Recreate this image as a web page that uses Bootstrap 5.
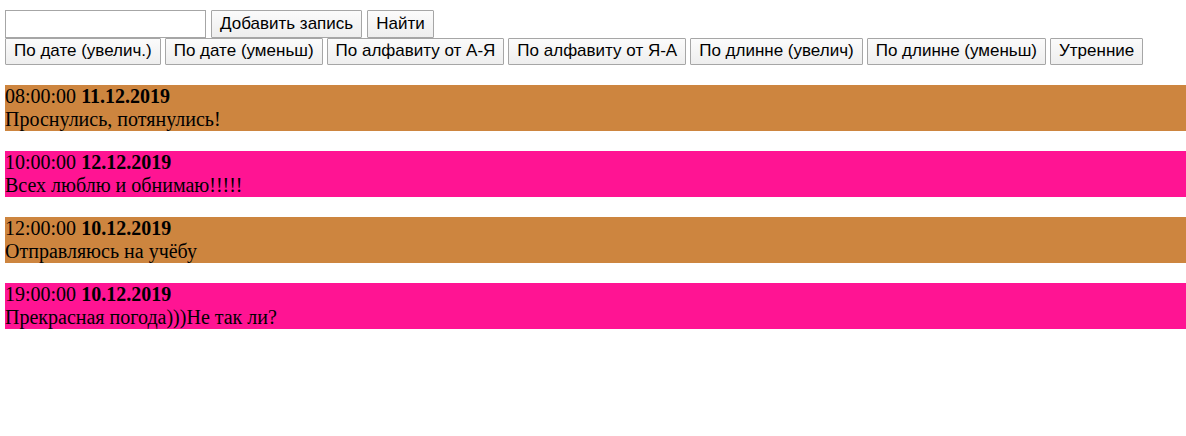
<!DOCTYPE html>
<html lang="ru">
<head>
<meta charset="utf-8">
<meta name="viewport" content="width=device-width, initial-scale=1">
<title>Записи</title>
<link rel="stylesheet" href="https://cdn.jsdelivr.net/npm/bootstrap@5.3.0/dist/css/bootstrap.min.css">
<style>
body { font-family: "Liberation Serif", serif; font-size: 20px; line-height: 23px; color: #000; background: #fff; padding: 10px 0 0 5px; }
.toolbar .btn, .toolbar .form-control { font-family: "Liberation Sans", sans-serif; font-size: 17px; line-height: 20px; color: #000; border: 1px solid #a6a6a6; border-radius: 1px; }
.toolbar .btn { padding: 3px 8px; background: linear-gradient(#fbfbfb, #eee); }
.toolbar .form-control { width: 201px; padding: 3px; border-radius: 0; }
.toolbar-search { gap: 5px; }
.toolbar-sort { gap: 4px; }
.toolbar-sort .btn { padding-top: 2px; }
.entries { margin-top: 20px; gap: 20px; }
.entry-morning { background: #cd853f; }
.entry-pink { background: #ff1493; }
</style>
</head>
<body>
<header>
<form class="toolbar toolbar-search d-flex flex-wrap">
<input type="text" class="form-control" aria-label="Текст записи">
<button type="button" class="btn">Добавить запись</button>
<button type="button" class="btn">Найти</button>
</form>
<div class="toolbar toolbar-sort d-flex flex-wrap">
<button type="button" class="btn">По дате (увелич.)</button>
<button type="button" class="btn">По дате (уменьш)</button>
<button type="button" class="btn">По алфавиту от А-Я</button>
<button type="button" class="btn">По алфавиту от Я-А</button>
<button type="button" class="btn">По длинне (увелич)</button>
<button type="button" class="btn">По длинне (уменьш)</button>
<button type="button" class="btn">Утренние</button>
</div>
</header>
<main class="entries d-flex flex-column">
<article class="entry-morning"><div>08:00:00 <b>11.12.2019</b></div><div>Проснулись, потянулись!</div></article>
<article class="entry-pink"><div>10:00:00 <b>12.12.2019</b></div><div>Всех люблю и обнимаю!!!!!</div></article>
<article class="entry-morning"><div>12:00:00 <b>10.12.2019</b></div><div>Отправляюсь на учёбу</div></article>
<article class="entry-pink"><div>19:00:00 <b>10.12.2019</b></div><div>Прекрасная погода)))Не так ли?</div></article>
</main>
<script src="https://cdn.jsdelivr.net/npm/bootstrap@5.3.0/dist/js/bootstrap.bundle.min.js"></script>
</body>
</html>
